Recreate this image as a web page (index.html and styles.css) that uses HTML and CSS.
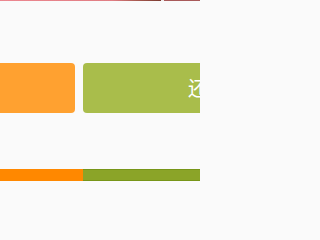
FILE: index.html
```html
<!DOCTYPE html>
<html>
<head>
<meta charset="utf-8">
<link rel="stylesheet" href="styles.css">
</head>
<body>
<div class="page">
  <div class="banner">
    <div class="banner-a"></div>
    <div class="banner-gap"></div>
    <div class="banner-b"></div>
  </div>
  <div class="actions">
    <div class="btn btn-orange"></div>
    <div class="btn btn-green"><span class="label">还款</span></div>
  </div>
  <div class="progress">
    <div class="seg seg-orange"></div>
    <div class="seg seg-green"></div>
  </div>
</div>
</body>
</html>
```
FILE: styles.css
```css
html, body {
  margin: 0;
  padding: 0;
  background: #fafafa;
  overflow: hidden;
}
.page {
  width: 200px;
  height: 231px;
  display: flex;
  flex-direction: column;
  overflow: hidden;
}
.banner {
  height: 1px;
  display: flex;
}
.banner-a {
  width: 161px;
  background: linear-gradient(to right, #ec8790 0%, #e07d83 70%, #a85a50 85%, #7a3a30 100%);
}
.banner-gap {
  width: 3px;
  background: #f0e8e8;
}
.banner-b {
  flex: 1;
  background: #a85a5a;
}
.actions {
  margin-top: 62px;
  height: 50px;
  display: flex;
  gap: 8px;
}
.btn {
  border-radius: 4px;
  height: 50px;
  flex-shrink: 0;
}
.btn-orange {
  width: 79px;
  margin-left: -4px;
  background: #ffa130;
}
.btn-green {
  width: 160px;
  background: #a9bd4b;
  display: flex;
  align-items: center;
  padding-left: 105px;
  box-sizing: border-box;
}
.label {
  color: #fff;
  font-family: "Noto Sans CJK SC", sans-serif;
  font-size: 20px;
  line-height: 1;
  white-space: nowrap;
}
.progress {
  margin-top: 56px;
  height: 12px;
  display: flex;
}
.seg-orange {
  width: 83px;
  flex-shrink: 0;
  background: #ff8800;
}
.seg-green {
  flex: 1;
  background: #8ba428;
  border-top: 1px solid #779518;
  border-bottom: 1px solid #779518;
  box-sizing: border-box;
}
```
